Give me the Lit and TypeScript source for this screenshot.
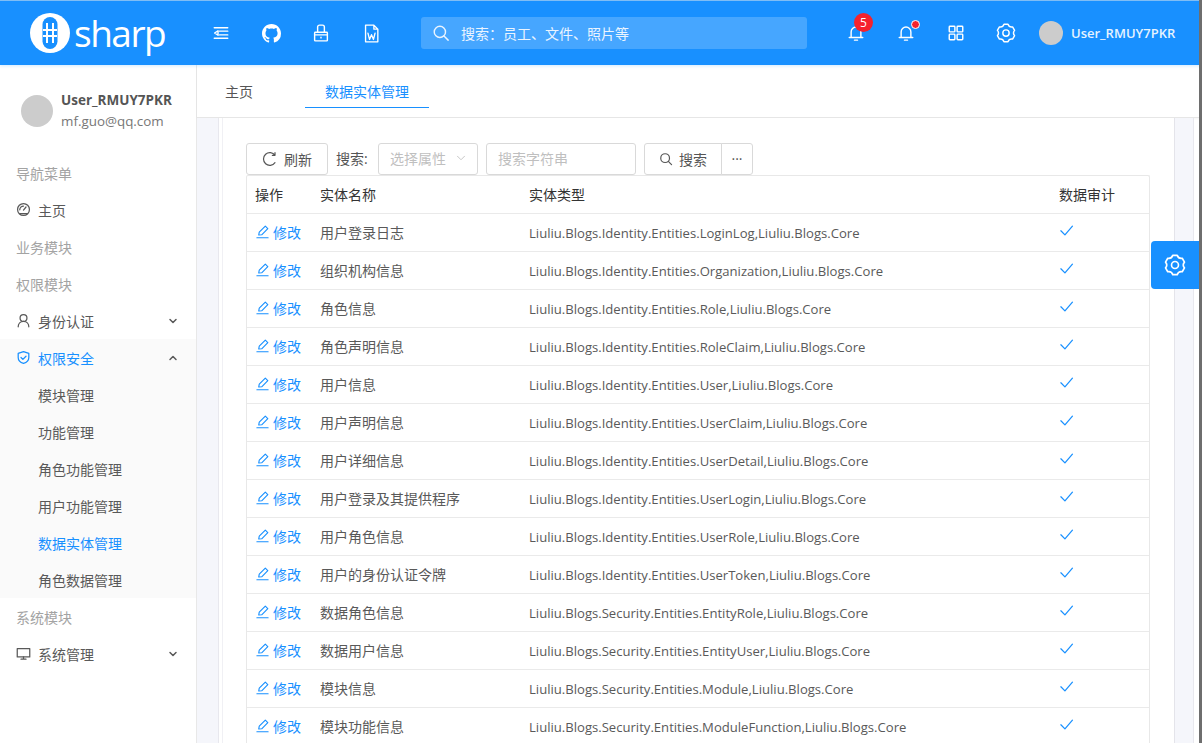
import { LitElement, css, html, svg } from "lit";
import { customElement } from "lit/decorators.js";

const icon = (body: unknown, size = 18, sw = 1.9) => html`<svg
  width=${size}
  height=${size}
  viewBox="0 0 24 24"
  fill="none"
  stroke="currentColor"
  stroke-width=${sw}
  stroke-linecap="round"
  stroke-linejoin="round"
>
  ${body}
</svg>`;

// six lobed cog, same shape in the header and the floating button
const gearPath = () => {
  const pt = (deg: number, r: number) => {
    const a = (deg * Math.PI) / 180;
    return `${(12 + r * Math.cos(a)).toFixed(2)} ${(12 + r * Math.sin(a)).toFixed(2)}`;
  };
  let d = "";
  for (let k = 0; k < 6; k++) {
    const c = k * 60 - 90;
    d += `${k ? "L" : "M"}${pt(c - 13, 10.8)}L${pt(c + 13, 10.8)}Q${pt(c + 30, 7.6)} ${pt(c + 47, 10.8)}`;
  }
  return d + "Z";
};

const gear = svg`<path d=${gearPath()}/><circle cx="12" cy="12" r="3.800"/>`;
const bell = svg`<path d="M5.500 18V10.500a6.500 6.500 0 0 1 13 0V18M3 18h18M10 21.500h4"/>`;
const chevronDown = svg`<path d="M6 9l6 6 6-6"/>`;
const chevronUp = svg`<path d="M6 15l6-6 6 6"/>`;
const pen = svg`<path d="M3 22h18M6 17.500l.8-4.500L16.500 3.500l4 4-9.800 9.800z"/>`;
const check = svg`<path d="M3 12.500l6.500 6.500L21.500 5"/>`;
const search = svg`<circle cx="10.500" cy="10.500" r="7.500"/><path d="M16 16l5.500 5.500"/>`;

const rows: [string, string][] = [
  ["用户登录日志", "Liuliu.Blogs.Identity.Entities.LoginLog,Liuliu.Blogs.Core"],
  ["组织机构信息", "Liuliu.Blogs.Identity.Entities.Organization,Liuliu.Blogs.Core"],
  ["角色信息", "Liuliu.Blogs.Identity.Entities.Role,Liuliu.Blogs.Core"],
  ["角色声明信息", "Liuliu.Blogs.Identity.Entities.RoleClaim,Liuliu.Blogs.Core"],
  ["用户信息", "Liuliu.Blogs.Identity.Entities.User,Liuliu.Blogs.Core"],
  ["用户声明信息", "Liuliu.Blogs.Identity.Entities.UserClaim,Liuliu.Blogs.Core"],
  ["用户详细信息", "Liuliu.Blogs.Identity.Entities.UserDetail,Liuliu.Blogs.Core"],
  ["用户登录及其提供程序", "Liuliu.Blogs.Identity.Entities.UserLogin,Liuliu.Blogs.Core"],
  ["用户角色信息", "Liuliu.Blogs.Identity.Entities.UserRole,Liuliu.Blogs.Core"],
  ["用户的身份认证令牌", "Liuliu.Blogs.Identity.Entities.UserToken,Liuliu.Blogs.Core"],
  ["数据角色信息", "Liuliu.Blogs.Security.Entities.EntityRole,Liuliu.Blogs.Core"],
  ["数据用户信息", "Liuliu.Blogs.Security.Entities.EntityUser,Liuliu.Blogs.Core"],
  ["模块信息", "Liuliu.Blogs.Security.Entities.Module,Liuliu.Blogs.Core"],
  ["模块功能信息", "Liuliu.Blogs.Security.Entities.ModuleFunction,Liuliu.Blogs.Core"],
];

const subMenu = ["模块管理", "功能管理", "角色功能管理", "用户功能管理", "数据实体管理", "角色数据管理"];

@customElement("app-root")
export class AppRoot extends LitElement {
  static styles = css`
    :host {
      display: block;
      height: 743px;
      overflow: hidden;
      position: relative;
      font-family: "Open Sans", "Noto Sans CJK SC", sans-serif;
      font-size: 14px;
      color: #555;
      background: #fff;
    }
    .header {
      height: 64px;
      border-top: 1px solid #7fbdf5;
      background: #1890ff;
      color: #fff;
      display: flex;
      align-items: center;
      box-shadow: 0 1px 3px rgba(24, 144, 255, 0.2);
      position: relative;
    }
    .logo {
      width: 196px;
      display: flex;
      align-items: center;
      padding-left: 30px;
      box-sizing: border-box;
      height: 100%;
    }
    .logo-mark {
      width: 40px;
      height: 40px;
      flex: none;
    }
    .logo-text {
      font-size: 37px;
      font-weight: 500;
      line-height: 40px;
      margin-left: 4px;
      margin-top: -1px;
      letter-spacing: -1.5px;
    }
    .tool {
      width: 50px;
      display: flex;
      justify-content: center;
      align-items: center;
      position: relative;
    }
    .tools-left {
      display: flex;
    }
    .search-box {
      margin-left: 25px;
      width: 386px;
      height: 32px;
      background: rgba(255, 255, 255, 0.2);
      border-radius: 3px;
      display: flex;
      align-items: center;
      padding-left: 11px;
      box-sizing: border-box;
      gap: 11px;
      font-size: 14px;
      color: #eaf4ff;
    }
    .tools-right {
      display: flex;
      margin-left: 24px;
    }
    .badge {
      position: absolute;
      left: 23px;
      top: -8px;
      width: 19px;
      height: 19px;
      border-radius: 50%;
      background: #f5222d;
      font-size: 12px;
      line-height: 19px;
      text-align: center;
    }
    .dot {
      position: absolute;
      left: 30px;
      top: -1px;
      width: 7px;
      height: 7px;
      border-radius: 50%;
      border: 1px solid #fff;
      background: #f5222d;
    }
    .user {
      display: flex;
      align-items: center;
      gap: 8px;
      margin-left: 8px;
      font-size: 13px;
      color: #e6f3ff;
      font-weight: 600;
    }
    .avatar {
      width: 24px;
      height: 24px;
      border-radius: 50%;
      background: #cccccc;
    }
    .body {
      display: flex;
      height: 678px;
    }
    .side {
      width: 196px;
      flex: none;
      background: #fff;
      border-right: 1px solid #e8e8e8;
    }
    .profile {
      display: flex;
      align-items: center;
      gap: 8px;
      padding: 20px 0 0 21px;
      height: 52px;
      margin-bottom: 17px;
    }
    .profile .avatar {
      width: 32px;
      height: 32px;
    }
    .profile b {
      display: block;
      font-size: 13.5px;
      line-height: 20px;
      color: #555;
    }
    .profile span {
      display: block;
      font-size: 13.4px;
      line-height: 22px;
      color: #777;
    }
    .m {
      height: 37px;
      display: flex;
      align-items: center;
      padding-left: 16px;
      gap: 7px;
      color: #595959;
    }
    .m.group {
      color: #a3a3a3;
    }
    .m.open {
      color: #1890ff;
      background: #fafafa;
    }
    .m .caret {
      margin-left: auto;
      margin-right: 17px;
      display: flex;
    }
    .m .caret.dark {
      color: #595959;
    }
    .subs {
      background: #fafafa;
    }
    .subs .m {
      padding-left: 38px;
    }
    .subs .m.active {
      color: #1890ff;
    }
    .main {
      flex: 1;
      min-width: 0;
      display: flex;
      flex-direction: column;
    }
    .tabs {
      height: 52px;
      background: #fff;
      border-bottom: 1px solid #e6e6e6;
      display: flex;
      box-shadow: 0 1px 2px rgba(0, 0, 0, 0.04);
      flex: none;
    }
    .tab {
      padding: 0 20px;
      height: 42px;
      line-height: 53px;
      width: 84px;
    }
    .tab.first {
      width: 28px;
      padding: 0 28px;
    }
    .tab.active {
      color: #1890ff;
      border-bottom: 1px solid #1890ff;
      margin-left: 24px;
    }
    .content {
      flex: 1;
      margin-right: 8px;
      padding: 0 18px 0 21px;
      background: #f5f6fb;
      border-right: 1px solid #e8e8ee;
      overflow: hidden;
    }
    .card {
      height: 100%;
      padding: 25px 0 0 27px;
      box-sizing: border-box;
      background: linear-gradient(#f0f0f4, #f0f0f4) 3px 0 / 1px 100% no-repeat #fff;
      border-left: 1px solid #e8e8ee;
      border-right: 1px solid #e4e4ea;
    }
    .toolbar {
      display: flex;
      align-items: center;
      height: 32px;
    }
    .btn {
      height: 32px;
      box-sizing: border-box;
      border: 1px solid #d9d9d9;
      border-radius: 3px;
      display: flex;
      align-items: center;
      justify-content: center;
      background: #fff;
      color: #555;
      gap: 6px;
      padding-bottom: 1px;
    }
    .btn.refresh {
      width: 82px;
    }
    .btn.find {
      width: 78px;
      margin-left: 8px;
      border-radius: 3px 0 0 3px;
    }
    .btn.more {
      width: 32px;
      margin-left: -1px;
      border-radius: 0 3px 3px 0;
    }
    .label {
      width: 34px;
      margin: -2px 8px 0;
      white-space: nowrap;
    }
    .field {
      height: 32px;
      box-sizing: border-box;
      border: 1px solid #d9d9d9;
      border-radius: 3px;
      display: flex;
      align-items: center;
      color: #bfbfbf;
      padding: 0 0 2px 11px;
    }
    .field.pick {
      width: 100px;
    }
    .field.pick span {
      display: flex;
      margin-left: 8px;
    }
    .field.text {
      width: 150px;
      margin-left: 8px;
    }
    .grid {
      width: 904px;
      border: 1px solid #e8e8e8;
      border-bottom: 0;
      border-radius: 2px;
      box-sizing: border-box;
    }
    .row {
      display: grid;
      grid-template-columns: 73px 209px 530px 1fr;
      height: 38px;
      align-items: center;
      border-top: 1px solid #eaeaea;
      box-sizing: border-box;
      color: #595959;
    }
    .row.head {
      border-top: 0;
      height: 37px;
      color: #333;
    }
    .row > div:first-child {
      padding-left: 8px;
    }
    .row > .cn {
      padding-bottom: 2px;
    }
    .type {
      font-size: 13.1px;
    }
    .edit {
      display: flex;
      align-items: center;
      gap: 3px;
      color: #1890ff;
    }
    .ok {
      display: flex;
      color: #1890ff;
      margin-top: -4px;
    }
    .setting {
      position: absolute;
      left: 1151px;
      top: 241px;
      width: 48px;
      height: 48px;
      background: #1890ff;
      border-radius: 4px 0 0 4px;
      color: #fff;
      display: flex;
      align-items: center;
      justify-content: center;
    }
    .edge {
      position: absolute;
      right: 0;
      top: 0;
      bottom: 0;
      width: 3px;
      background: #6e6e6e;
    }
  `;

  render() {
    return html`
      <div class="header">
        <div class="logo">
          <svg class="logo-mark" viewBox="0 0 40 40">
            <circle cx="20" cy="20" r="20" fill="#fff" />
            <rect x="12.500" y="4" width="15" height="32" rx="7.500" fill="#1890ff" />
            <path d="M17 10v20M23 10v20M13 17h14M13 23h14" stroke="#fff" stroke-width="2" fill="none" />
          </svg>
          <span class="logo-text">sharp</span>
        </div>
        <div class="tools-left">
          <div class="tool">
            ${icon(svg`<path d="M3 5h18M10 9.500h11M10 14.500h11M3 19h18M8 9l-4.500 3L8 15z"/>`)}
          </div>
          <div class="tool">
            <svg width="19" height="19" viewBox="0 0 16 16" fill="currentColor">
              <path
                d="M8 0C3.580 0 0 3.580 0 8c0 3.540 2.290 6.530 5.470 7.590.4.070.55-.17.55-.38 0-.19-.01-.82-.01-1.490-2.010.37-2.530-.49-2.690-.94-.09-.23-.48-.94-.82-1.130-.28-.15-.68-.52-.01-.53.63-.01 1.080.58 1.230.82.720 1.210 1.870.870 2.330.660.070-.52.280-.870.510-1.070-1.780-.2-3.640-.89-3.640-3.950 0-.870.310-1.590.820-2.150-.08-.2-.36-1.020.08-2.120 0 0 .67-.21 2.200.82.640-.18 1.320-.27 2-.27s1.360.09 2 .27c1.530-1.040 2.200-.82 2.200-.82.440 1.100.16 1.920.08 2.120.51.560.82 1.270.82 2.150 0 3.070-1.870 3.750-3.650 3.950.290.250.540.730.540 1.480 0 1.070-.01 1.930-.01 2.200 0 .210.150.460.550.380A8.010 8.010 0 0 0 16 8c0-4.420-3.580-8-8-8z"
              />
            </svg>
          </div>
          <div class="tool">
            ${icon(svg`<rect x="3.500" y="11" width="17" height="11.500" rx="1"/><path d="M7.500 11V4a2.500 2.500 0 0 1 2.500-2.500h4A2.500 2.500 0 0 1 16.500 4v7M3.500 14.500h17M12 17.500v1"/>`)}
          </div>
          <div class="tool">
            ${icon(svg`<path d="M4.500 1.500h10.500l5 5v16H4.500zM15 1.500v5h5M7.500 11.500l2 8 2.500-6 2.500 6 2-8"/>`, 19, 1.700)}
          </div>
        </div>
        <div class="search-box">
          ${icon(search, 18)}
          <span>搜索：员工、文件、照片等</span>
        </div>
        <div class="tools-right">
          <div class="tool">
            ${icon(bell)}
            <span class="badge">5</span>
          </div>
          <div class="tool">
            ${icon(bell)}
            <span class="dot"></span>
          </div>
          <div class="tool">
            ${icon(svg`<rect x="3" y="3" width="7.500" height="7.500" rx="1"/><rect x="13.500" y="3" width="7.500" height="7.500" rx="1"/><rect x="3" y="13.500" width="7.500" height="7.500" rx="1"/><rect x="13.500" y="13.500" width="7.500" height="7.500" rx="1"/>`)}
          </div>
          <div class="tool">${icon(gear, 20, 1.700)}</div>
          <div class="user"><span class="avatar"></span>User_RMUY7PKR</div>
        </div>
      </div>
      <div class="body">
        <div class="side">
          <div class="profile">
            <div class="avatar"></div>
            <div><b>User_RMUY7PKR</b><span>mf.guo@qq.com</span></div>
          </div>
          <div class="m group">导航菜单</div>
          <div class="m">
            ${icon(svg`<circle cx="12" cy="12" r="9.500"/><path d="M12 13l4-5M6 12.500a6 6 0 0 1 6-6M5.500 18.500h13"/>`, 15, 2)} 主页
          </div>
          <div class="m group">业务模块</div>
          <div class="m group">权限模块</div>
          <div class="m">
            ${icon(svg`<circle cx="12" cy="8" r="5.500"/><path d="M3.500 22c0-5 3.500-8.500 8.500-8.500s8.500 3.500 8.500 8.500"/>`, 15, 2)} 身份认证
            <span class="caret">${icon(chevronDown, 12, 3)}</span>
          </div>
          <div class="m open">
            ${icon(svg`<path d="M12 2.500l8.500 3V12c0 5-3.500 8-8.500 9.500C7 20 3.500 17 3.500 12V5.500zM8 12l3 3 5-5"/>`, 15, 2)} 权限安全
            <span class="caret dark">${icon(chevronUp, 12, 3)}</span>
          </div>
          <div class="subs">
            ${subMenu.map(
              (s) => html`<div class="m ${s === "数据实体管理" ? "active" : ""}">${s}</div>`
            )}
          </div>
          <div class="m group">系统模块</div>
          <div class="m">
            ${icon(svg`<rect x="2" y="4" width="20" height="13.500"/><path d="M8 21h8M12 17.500V21"/>`, 15, 2)} 系统管理
            <span class="caret">${icon(chevronDown, 12, 3)}</span>
          </div>
        </div>
        <div class="main">
          <div class="tabs">
            <div class="tab first">主页</div>
            <div class="tab active">数据实体管理</div>
          </div>
          <div class="content">
            <div class="card">
              <div class="toolbar">
                <div class="btn refresh">
                  ${icon(svg`<path d="M19.500 6.500A9.500 9.500 0 1 0 19.500 17.500M19.500 2.500v4h-4"/>`, 16, 1.800)} 刷新
                </div>
                <span class="label">搜索:</span>
                <div class="field pick">
                  选择属性
                  <span>${icon(chevronDown, 14, 1.500)}</span>
                </div>
                <div class="field text">搜索字符串</div>
                <div class="btn find">${icon(search, 14, 2)} 搜索</div>
                <div class="btn more">···</div>
              </div>
              <div class="grid">
                <div class="row head">
                  <div class="cn">操作</div>
                  <div class="cn">实体名称</div>
                  <div class="cn">实体类型</div>
                  <div class="cn">数据审计</div>
                </div>
                ${rows.map(
                  ([name, type]) => html`<div class="row">
                    <div class="edit cn">${icon(pen, 15, 1.800)} 修改</div>
                    <div class="cn">${name}</div>
                    <div class="type">${type}</div>
                    <div class="ok">${icon(check, 15, 2)}</div>
                  </div>`
                )}
              </div>
            </div>
          </div>
        </div>
      </div>
      <div class="setting">${icon(gear, 22, 1.800)}</div>
      <div class="edge"></div>
    `;
  }
}
